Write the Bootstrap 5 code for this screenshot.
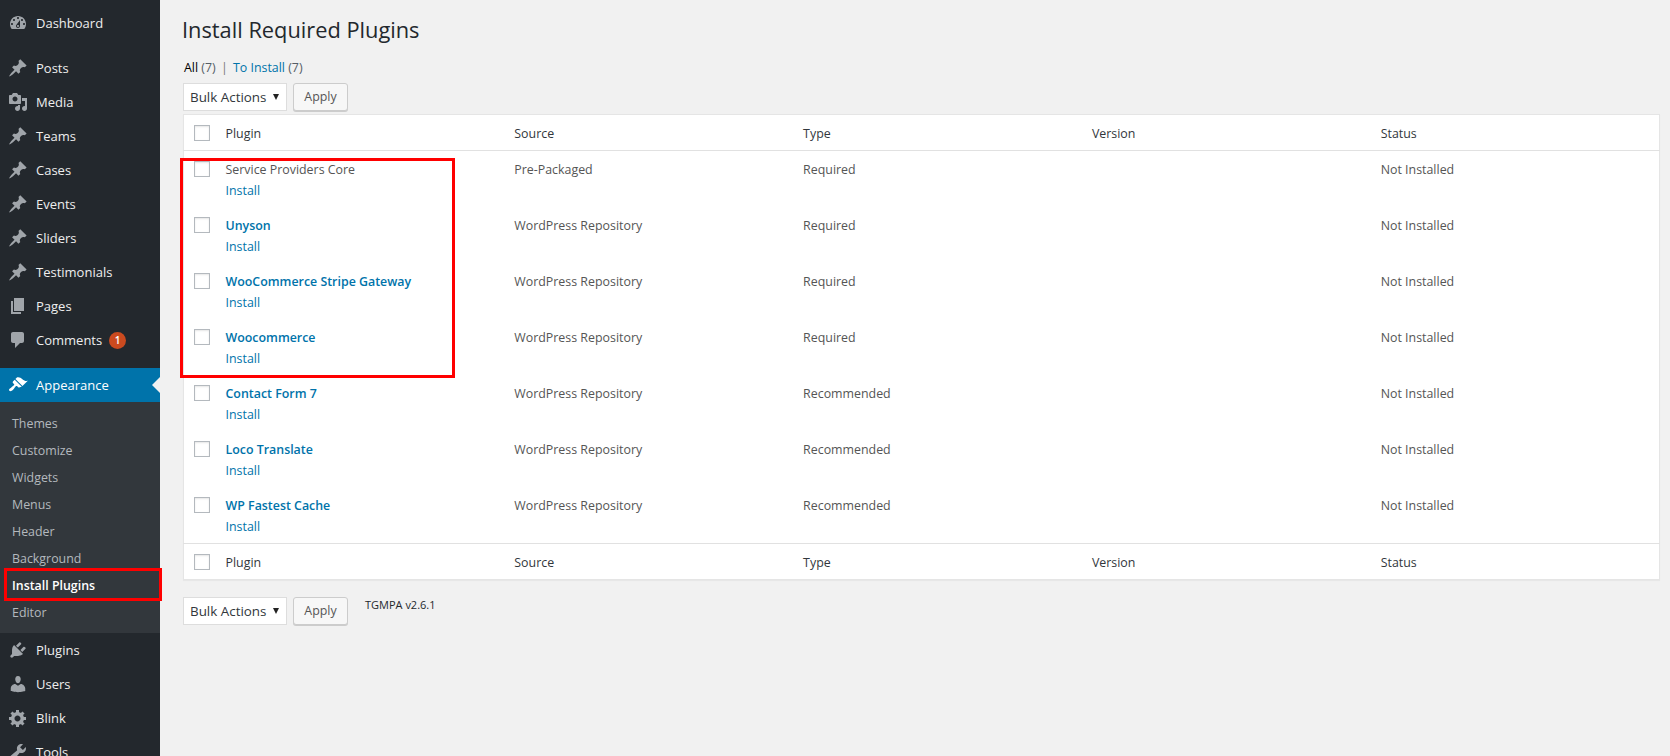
<!DOCTYPE html>
<html lang="en">
<head>
    <meta charset="UTF-8">
    <title>Install Required Plugins</title>
    <link rel="stylesheet" href="https://cdn.jsdelivr.net/npm/bootstrap@5.3.0/dist/css/bootstrap.min.css">
    <style>
        html, body { height: 756px; overflow: hidden; }
        body { background: #f1f1f1; color: #444; font: 12.4px/1.4 "Open Sans", sans-serif; }
        a { color: #0073aa; text-decoration: none; }

        .wp-side { width: 160px; height: 756px; background: #23282d; overflow: hidden; padding-top: 6px; }
        .wp-item { height: 34px; padding-left: 8px; gap: 8px; color: #eee; font-size: 13px; }
        .wp-item svg { width: 20px; height: 20px; fill: #a0a5aa; flex: none; }
        .wp-sep { height: 11px; }
        .wp-item.is-current { background: #0073aa; color: #fff; position: relative; }
        .wp-item.is-current svg { fill: #fff; }
        .wp-item.is-current::after { content: ""; position: absolute; right: 0; top: 9px; border: 8px solid transparent; border-right-color: #f1f1f1; border-left-width: 0; }
        .wp-sub { background: #32373c; padding: 8px 0 7px; }
        .wp-sub div { height: 27px; line-height: 27px; padding-left: 12px; color: #b4b9be; font-size: 12.4px; }
        .wp-sub div.is-current { color: #fff; font-weight: 600; }
        .wp-count { width: 17px; height: 17px; border-radius: 50%; background: #ca4a1f; color: #fff; font-size: 10px; font-weight: 600; margin-left: -1px; }

        .wp-main { padding: 0 10px 0 23px; min-width: 0; }
        .wp-title { font-size: 21.8px; font-weight: 400; line-height: 29px; color: #23282d; margin: 15px 0 0 -1px; }
        .wp-filters { margin: 14px 0 0 1px; line-height: 20px; color: #555d66; height: 20px; font-size: 12.4px; }
        .wp-filters b { font-weight: 400; color: #000; }
        .wp-filters .sep { color: #777; margin: 0 2px; }
        .wp-bulk { height: 28px; gap: 6px; margin-top: 5px; }
        .wp-select { width: 104px; height: 28px; background: #fff; border: 1px solid #ddd; color: #32373c; font-size: 13.4px; padding: 0 6px; line-height: 27px; position: relative; }
        .wp-select::after { content: ""; position: absolute; right: 7px; top: 10px; border: 3.5px solid transparent; border-top: 6px solid #222; border-bottom: 0; }
        .wp-apply { width: 55px; height: 28px; padding: 0; font-size: 12.4px; line-height: 26px; color: #555; background: #f7f7f7; border: 1px solid #ccc; border-radius: 3px; box-shadow: 0 1px 0 #ccc; }
        .wp-apply:hover { color: #555; background: #f7f7f7; border-color: #ccc; }

        .wp-table { table-layout: fixed; width: 100%; margin: 3px 0 0; background: #fff; border: 1px solid #e5e5e5; box-shadow: 0 1px 1px rgba(0,0,0,.04); color: #32373c; }
        .wp-table > * > tr > * { border: 0; padding: 9px 10px 6px; line-height: 20px; font-size: 12.4px; font-weight: 400; color: #555; background: transparent; box-shadow: none; vertical-align: top; }
        .wp-table > thead > tr > th, .wp-table > tfoot > tr > th { font-size: 12.4px; line-height: 20px; color: #32373c; padding: 9px 10px 6px; height: 36px; }
        .wp-table thead th { border-bottom: 1px solid #e1e1e1; }
        .wp-table tfoot th { border-top: 1px solid #e1e1e1; }
        .wp-table > * > tr > .wp-check { width: 32px; padding: 0 0 0 10px; }
        .wp-table > tbody > tr > .wp-check { padding-top: 10px; }
        .wp-table > thead > tr > .wp-check, .wp-table > tfoot > tr > .wp-check { padding-top: 10px; }
        .wp-box { display: block; width: 16px; height: 16px; background: #fff; border: 1px solid #b4b9be; box-shadow: inset 0 1px 2px rgba(0,0,0,.1); }
        .wp-name { font-weight: 600; color: #0073aa; margin-bottom: 1px; }
        .wp-name.plain { font-weight: 400; color: #555; }

        .wp-foot { margin-top: 17px; gap: 6px; }
        .wp-version { font-size: 11px; color: #23282d; margin: 0 0 0 11px; line-height: 15px; }

        .wp-mark { position: absolute; border: 3px solid #f00; pointer-events: none; }
        .wp-mark-side { left: 4px; top: 568px; width: 158px; height: 33px; }
        .wp-mark-rows { left: 180px; top: 158px; width: 275px; height: 220px; }
    </style>
</head>
<body>
<svg class="d-none">
    <symbol id="i-dash" viewBox="0 0 20 20"><path d="M3.76 16h12.48c1.1-1.37 1.76-3.11 1.76-5 0-4.42-3.58-8-8-8s-8 3.58-8 8c0 1.89.66 3.63 1.76 5zM10 4c.55 0 1 .45 1 1s-.45 1-1 1-1-.45-1-1 .45-1 1-1zM6 6c.55 0 1 .45 1 1s-.45 1-1 1-1-.45-1-1 .45-1 1-1zm8 0c.55 0 1 .45 1 1s-.45 1-1 1-1-.45-1-1 .45-1 1-1zm-5.37 5.55L12 7v6c0 1.1-.9 2-2 2s-2-.9-2-2c0-.57.24-1.08.63-1.45zM4 10c.55 0 1 .45 1 1s-.45 1-1 1-1-.45-1-1 .45-1 1-1zm12 0c.55 0 1 .45 1 1s-.45 1-1 1-1-.45-1-1 .45-1 1-1zm-5 3c0-.55-.45-1-1-1s-1 .45-1 1 .45 1 1 1 1-.45 1-1z"/></symbol>
    <symbol id="i-pin" viewBox="0 0 20 20"><path d="M10.44 3.02l1.82-1.82 6.36 6.35-1.83 1.82c-1.05-.68-2.48-.57-3.41.36l-.75.75c-.92.93-1.04 2.35-.35 3.41l-1.83 1.82-2.41-2.41-2.8 2.79c-.42.42-3.38 2.71-3.8 2.29s1.86-3.39 2.28-3.81l2.79-2.79L4.1 9.36l1.83-1.82c1.05.69 2.48.57 3.4-.36l.75-.75c.93-.92 1.05-2.35.36-3.41z"/></symbol>
    <symbol id="i-media" viewBox="0 0 20 20"><path d="M13 11V4c0-.55-.45-1-1-1h-1.67L9 1H5L3.67 3H2c-.55 0-1 .45-1 1v7c0 .55.45 1 1 1h10c.55 0 1-.45 1-1zM7 4.5c1.38 0 2.5 1.12 2.5 2.5S8.38 9.5 7 9.5 4.5 8.38 4.5 7 5.62 4.5 7 4.5zM14 6h5v10.5c0 1.38-1.12 2.5-2.5 2.5S14 17.88 14 16.5s1.12-2.5 2.5-2.5c.17 0 .34.02.5.05V9h-3V6zm-4 8.05V13h2v3.5c0 1.38-1.12 2.5-2.5 2.5S7 17.88 7 16.5 8.12 14 9.5 14c.17 0 .34.02.5.05z"/></symbol>
    <symbol id="i-pages" viewBox="0 0 20 20"><path d="M6 15V2h10v13H6zm-1 1h8v2H3V5h2v11z"/></symbol>
    <symbol id="i-comment" viewBox="0 0 20 20"><path d="M5 2h9c1.1 0 2 .9 2 2v7c0 1.1-.9 2-2 2h-2l-5 5v-5H5c-1.1 0-2-.9-2-2V4c0-1.1.9-2 2-2z"/></symbol>
    <symbol id="i-brush" viewBox="0 0 20 20"><path d="M14.48 11.06L7.41 3.99l1.5-1.5c.5-.56 2.3-.47 3.51.32 1.21.8 1.43 1.28 2.91 2.1 1.18.64 2.45 1.26 4.45.85zm-.71.71L6.7 4.7 4.93 6.47c-.39.39-.39 1.02 0 1.41l1.06 1.06c.39.39.39 1.03 0 1.42-.6.6-1.43 1.11-2.21 1.69-.35.26-.7.53-1.01.84C1.43 13.23.4 14.76 1.4 15.76c.99 1 2.53 0 3.87-1.34.31-.31.58-.67.83-1.02.57-.79 1.07-1.63 1.68-2.23.39-.39 1.03-.39 1.42 0l1.06 1.06c.39.39 1.02.39 1.41 0z"/></symbol>
    <symbol id="i-plug" viewBox="0 0 20 20"><path d="M13.11 4.36L9.87 7.6 8 5.73l3.24-3.24c.35-.34 1.05-.2 1.56.32.52.51.66 1.21.31 1.55zm-8 1.77l.91-1.12 9.01 9.01-1.19.84c-.71.71-2.63 1.16-3.82 1.16H6.14L4.9 17.26c-.59.59-1.54.59-2.12 0-.59-.58-.59-1.53 0-2.12l1.24-1.24v-3.88c0-1.13.4-3.19 1.09-3.89zm7.26 3.97l3.24-3.24c.34-.35 1.04-.21 1.55.31.52.51.66 1.21.31 1.55l-3.24 3.25z"/></symbol>
    <symbol id="i-user" viewBox="0 0 20 20"><path d="M10 9.25c-2.27 0-2.73-3.44-2.73-3.44C7 4.02 7.82 2 9.97 2c2.16 0 2.98 2.02 2.71 3.81 0 0-.41 3.44-2.68 3.44zm0 2.57L12.72 10c2.39 0 4.52 2.33 4.52 4.53v2.49s-3.65 1.13-7.24 1.13c-3.65 0-7.24-1.13-7.24-1.13v-2.49c0-2.25 1.94-4.48 4.47-4.48z"/></symbol>
    <symbol id="i-gear" viewBox="0 0 20 20"><path d="M18 12h-2.18c-.17.7-.44 1.35-.81 1.93l1.54 1.54-2.1 2.1-1.54-1.54c-.58.36-1.23.63-1.91.79V19H8v-2.18c-.68-.16-1.33-.43-1.91-.79l-1.54 1.54-2.12-2.12 1.54-1.54c-.36-.58-.63-1.23-.79-1.91H1V9.03h2.17c.16-.7.44-1.35.8-1.94L2.43 5.55l2.1-2.1 1.54 1.54c.58-.37 1.24-.64 1.93-.81V2h3v2.18c.68.16 1.33.43 1.91.79l1.54-1.54 2.12 2.12-1.54 1.54c.36.59.64 1.24.8 1.94H18V12zm-8.5 1.5c1.66 0 3-1.34 3-3s-1.34-3-3-3-3 1.34-3 3 1.34 3 3 3z"/></symbol>
    <symbol id="i-tools" viewBox="0 0 20 20"><path d="M16.68 9.77c-1.34 1.34-3.3 1.67-4.95.99l-5.41 6.52c-.99.99-2.59.99-3.58 0s-.99-2.59 0-3.57l6.52-5.42c-.68-1.65-.35-3.61.99-4.95 1.28-1.28 3.12-1.62 4.72-1.06l-2.89 2.89 2.82 2.82 2.86-2.87c.53 1.58.18 3.39-1.08 4.67zM3.81 16.21c.4.39 1.04.39 1.43 0 .4-.4.4-1.04 0-1.43-.39-.4-1.03-.4-1.43 0-.39.39-.39 1.03 0 1.43z"/></symbol>
</svg>

<div class="d-flex">
    <nav class="wp-side flex-shrink-0">
        <div class="wp-item d-flex align-items-center"><svg><use href="#i-dash"/></svg>Dashboard</div>
        <div class="wp-sep"></div>
        <div class="wp-item d-flex align-items-center"><svg><use href="#i-pin"/></svg>Posts</div>
        <div class="wp-item d-flex align-items-center"><svg><use href="#i-media"/></svg>Media</div>
        <div class="wp-item d-flex align-items-center"><svg><use href="#i-pin"/></svg>Teams</div>
        <div class="wp-item d-flex align-items-center"><svg><use href="#i-pin"/></svg>Cases</div>
        <div class="wp-item d-flex align-items-center"><svg><use href="#i-pin"/></svg>Events</div>
        <div class="wp-item d-flex align-items-center"><svg><use href="#i-pin"/></svg>Sliders</div>
        <div class="wp-item d-flex align-items-center"><svg><use href="#i-pin"/></svg>Testimonials</div>
        <div class="wp-item d-flex align-items-center"><svg><use href="#i-pages"/></svg>Pages</div>
        <div class="wp-item d-flex align-items-center"><svg><use href="#i-comment"/></svg>Comments<span class="wp-count d-inline-flex align-items-center justify-content-center">1</span></div>
        <div class="wp-sep"></div>
        <div class="wp-item is-current d-flex align-items-center"><svg><use href="#i-brush"/></svg>Appearance</div>
        <div class="wp-sub">
            <div>Themes</div>
            <div>Customize</div>
            <div>Widgets</div>
            <div>Menus</div>
            <div>Header</div>
            <div>Background</div>
            <div class="is-current">Install Plugins</div>
            <div>Editor</div>
        </div>
        <div class="wp-item d-flex align-items-center"><svg><use href="#i-plug"/></svg>Plugins</div>
        <div class="wp-item d-flex align-items-center"><svg><use href="#i-user"/></svg>Users</div>
        <div class="wp-item d-flex align-items-center"><svg><use href="#i-gear"/></svg>Blink</div>
        <div class="wp-item d-flex align-items-center"><svg><use href="#i-tools"/></svg>Tools</div>
    </nav>

    <main class="wp-main flex-grow-1">
        <h1 class="wp-title">Install Required Plugins</h1>
        <p class="wp-filters"><b>All</b> (7) <span class="sep">|</span> <a href="#">To Install</a> (7)</p>
        <div class="wp-bulk d-flex">
            <div class="wp-select">Bulk Actions</div>
            <button type="button" class="btn wp-apply">Apply</button>
        </div>

        <table class="table wp-table">
            <thead>
                <tr><th class="wp-check"><span class="wp-box"></span></th><th>Plugin</th><th>Source</th><th>Type</th><th>Version</th><th>Status</th></tr>
            </thead>
            <tbody id="rows"></tbody>
            <tfoot>
                <tr><th class="wp-check"><span class="wp-box"></span></th><th>Plugin</th><th>Source</th><th>Type</th><th>Version</th><th>Status</th></tr>
            </tfoot>
        </table>

        <div class="wp-foot d-flex">
            <div class="wp-select">Bulk Actions</div>
            <button type="button" class="btn wp-apply">Apply</button>
            <p class="wp-version">TGMPA v2.6.1</p>
        </div>
    </main>
</div>

<div class="wp-mark wp-mark-side"></div>
<div class="wp-mark wp-mark-rows"></div>

<script src="https://cdn.jsdelivr.net/npm/bootstrap@5.3.0/dist/js/bootstrap.bundle.min.js"></script>
<script>
// Plugin rows
const plugins = [
    ['Service Providers Core', 'Pre-Packaged', 'Required', true],
    ['Unyson', 'WordPress Repository', 'Required'],
    ['WooCommerce Stripe Gateway', 'WordPress Repository', 'Required'],
    ['Woocommerce', 'WordPress Repository', 'Required'],
    ['Contact Form 7', 'WordPress Repository', 'Recommended'],
    ['Loco Translate', 'WordPress Repository', 'Recommended'],
    ['WP Fastest Cache', 'WordPress Repository', 'Recommended']
];
document.getElementById('rows').innerHTML = plugins.map(p => `
    <tr>
        <td class="wp-check"><span class="wp-box"></span></td>
        <td><div class="wp-name ${p[3] ? 'plain' : ''}">${p[0]}</div><a href="#">Install</a></td>
        <td>${p[1]}</td>
        <td>${p[2]}</td>
        <td></td>
        <td>Not Installed</td>
    </tr>`).join('');
</script>
</body>
</html>
